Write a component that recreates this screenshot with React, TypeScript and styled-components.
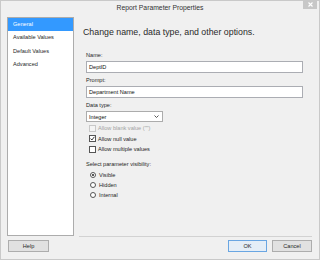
import React from 'react';
import styled, { createGlobalStyle } from 'styled-components';

const GlobalStyle = createGlobalStyle`
  html, body {
    margin: 0;
    padding: 0;
    background: #f0f0f0;
  }
  body {
    font-family: "Liberation Sans", Arial, sans-serif;
    color: #262626;
  }
`;

const Window = styled.div`
  width: 320px;
  height: 260px;
  box-sizing: border-box;
  display: flex;
  flex-direction: column;
  background: #f0f0f0;
  border: 1px solid #c9c9c9;
`;

const TitleBar = styled.div`
  height: 13px;
  flex: 0 0 auto;
  display: grid;
  grid-template-columns: 1fr auto 1fr;
  align-items: center;
`;

const Title = styled.div`
  grid-column: 2;
  font-size: 6.8px;
  color: #333;
`;

const CloseButton = styled.div`
  grid-column: 3;
  justify-self: end;
  align-self: start;
  width: 14px;
  height: 9px;
  margin-right: 2px;
  margin-top: -1px;
  background: #c7c7c7;
  display: flex;
  align-items: center;
  justify-content: center;
`;

const Body = styled.div`
  flex: 1;
  display: flex;
  gap: 5px;
  padding: 3px 7px 0 6px;
  min-height: 0;
`;

const Sidebar = styled.div`
  width: 67px;
  box-sizing: border-box;
  margin-bottom: 1px;
  background: #fff;
  border: 1px solid #acacac;
`;

const NavItem = styled.div<{ $active?: boolean }>`
  height: 13.4px;
  line-height: 13.4px;
  padding-left: 5px;
  font-size: 5.6px;
  color: ${({ $active }) => ($active ? '#fff' : '#262626')};
  background: ${({ $active }) => ($active ? '#3399ff' : 'transparent')};
`;

const Main = styled.div`
  flex: 1;
  display: flex;
  flex-direction: column;
  border-bottom: 1px solid #d2d2d2;
`;

const Heading = styled.div`
  margin: 8px 0 0 4px;
  font-size: 8.8px;
  line-height: 14px;
  color: #2a2a2a;
`;

const Form = styled.div`
  display: flex;
  flex-direction: column;
  padding: 0 9px 0 7px;
`;

const Label = styled.div<{ $gap: number }>`
  margin-top: ${({ $gap }) => $gap}px;
  font-size: 5.6px;
  line-height: 10px;
`;

const TextBox = styled.div`
  margin-top: 1px;
  height: 12px;
  box-sizing: border-box;
  border: 1px solid #abadb3;
  background: #fff;
  padding-left: 2px;
  font-size: 5.6px;
  line-height: 10px;
  color: #111;
`;

const Select = styled.div`
  margin-top: 1px;
  width: 77px;
  height: 11px;
  box-sizing: border-box;
  border: 1px solid #acacac;
  background: #fff;
  padding: 0 3px 0 2px;
  display: flex;
  align-items: center;
  justify-content: space-between;
  font-size: 5.6px;
  color: #111;
`;

const OptionList = styled.div<{ $gap: number; $row: number }>`
  margin-top: ${({ $gap }) => $gap}px;
  display: grid;
  grid-auto-rows: ${({ $row }) => $row}px;
`;

const OptionRow = styled.div<{ $disabled?: boolean }>`
  display: flex;
  align-items: center;
  gap: 2px;
  padding-left: 3px;
  font-size: 5.6px;
  color: ${({ $disabled }) => ($disabled ? '#a3a3a3' : '#262626')};
`;

const CheckBox = styled.div<{ $disabled?: boolean }>`
  width: 7px;
  height: 7px;
  box-sizing: border-box;
  border: 1px solid ${({ $disabled }) => ($disabled ? '#c8c8c8' : '#555')};
  background: ${({ $disabled }) => ($disabled ? '#f4f4f4' : '#fff')};
  display: flex;
  align-items: center;
  justify-content: center;
`;

const Radio = styled.div<{ $checked?: boolean }>`
  width: 6px;
  height: 6px;
  margin: 0 1px 0 1px;
  box-sizing: border-box;
  border: 1px solid #555;
  border-radius: 50%;
  background: #fff;
  display: flex;
  align-items: center;
  justify-content: center;

  &::after {
    content: '';
    width: 2px;
    height: 2px;
    border-radius: 50%;
    background: ${({ $checked }) => ($checked ? '#222' : 'transparent')};
  }
`;

const Footer = styled.div`
  height: 22px;
  flex: 0 0 auto;
  box-sizing: border-box;
  display: flex;
  align-items: flex-start;
  padding: 3px 7px 0 7px;
  gap: 5px;
`;

const Spacer = styled.div`
  flex: 1;
`;

const Button = styled.div<{ $width: number; $default?: boolean }>`
  width: ${({ $width }) => $width}px;
  height: 12px;
  box-sizing: border-box;
  border: 1px solid ${({ $default }) => ($default ? '#6aa6e2' : '#adadad')};
  background: ${({ $default }) => ($default ? '#e5eef7' : '#e1e1e1')};
  display: flex;
  align-items: center;
  justify-content: center;
  font-size: 5.6px;
  color: #262626;
`;

const navItems = ['General', 'Available Values', 'Default Values', 'Advanced'];

const checks = [
  { label: 'Allow blank value ("")', checked: false, disabled: true },
  { label: 'Allow null value', checked: true, disabled: false },
  { label: 'Allow multiple values', checked: false, disabled: false },
];

const radios = [
  { label: 'Visible', checked: true },
  { label: 'Hidden', checked: false },
  { label: 'Internal', checked: false },
];

export default function App() {
  return (
    <>
      <GlobalStyle />
      <Window>
        <TitleBar>
          <Title>Report Parameter Properties</Title>
          <CloseButton>
            <svg width="5" height="5" viewBox="0 0 5 5">
              <path d="M0.5 0.5 L4.5 4.5 M4.5 0.5 L0.5 4.5" stroke="#fff" strokeWidth="1.1" />
            </svg>
          </CloseButton>
        </TitleBar>
        <Body>
          <Sidebar>
            {navItems.map((item, i) => (
              <NavItem key={item} $active={i === 0}>
                {item}
              </NavItem>
            ))}
          </Sidebar>
          <Main>
            <Heading>Change name, data type, and other options.</Heading>
            <Form>
              <Label $gap={11}>Name:</Label>
              <TextBox>DeptID</TextBox>
              <Label $gap={2}>Prompt:</Label>
              <TextBox>Department Name</TextBox>
              <Label $gap={2}>Data type:</Label>
              <Select>
                <span>Integer</span>
                <svg width="5" height="3" viewBox="0 0 5 3">
                  <path d="M0.5 0.5 L2.5 2.5 L4.5 0.5" stroke="#444" strokeWidth="0.9" fill="none" />
                </svg>
              </Select>
              <OptionList $gap={1} $row={10.5}>
                {checks.map((c) => (
                  <OptionRow key={c.label} $disabled={c.disabled}>
                    <CheckBox $disabled={c.disabled}>
                      {c.checked && (
                        <svg width="5" height="5" viewBox="0 0 5 5">
                          <path d="M0.6 2.6 L1.9 4 L4.4 0.8" stroke="#222" strokeWidth="0.9" fill="none" />
                        </svg>
                      )}
                    </CheckBox>
                    <span>{c.label}</span>
                  </OptionRow>
                ))}
              </OptionList>
              <Label $gap={4.5}>Select parameter visibility:</Label>
              <OptionList $gap={1} $row={10}>
                {radios.map((r) => (
                  <OptionRow key={r.label}>
                    <Radio $checked={r.checked} />
                    <span>{r.label}</span>
                  </OptionRow>
                ))}
              </OptionList>
            </Form>
          </Main>
        </Body>
        <Footer>
          <Button $width={41}>Help</Button>
          <Spacer />
          <Button $width={39} $default>
            OK
          </Button>
          <Button $width={40}>Cancel</Button>
        </Footer>
      </Window>
    </>
  );
}
